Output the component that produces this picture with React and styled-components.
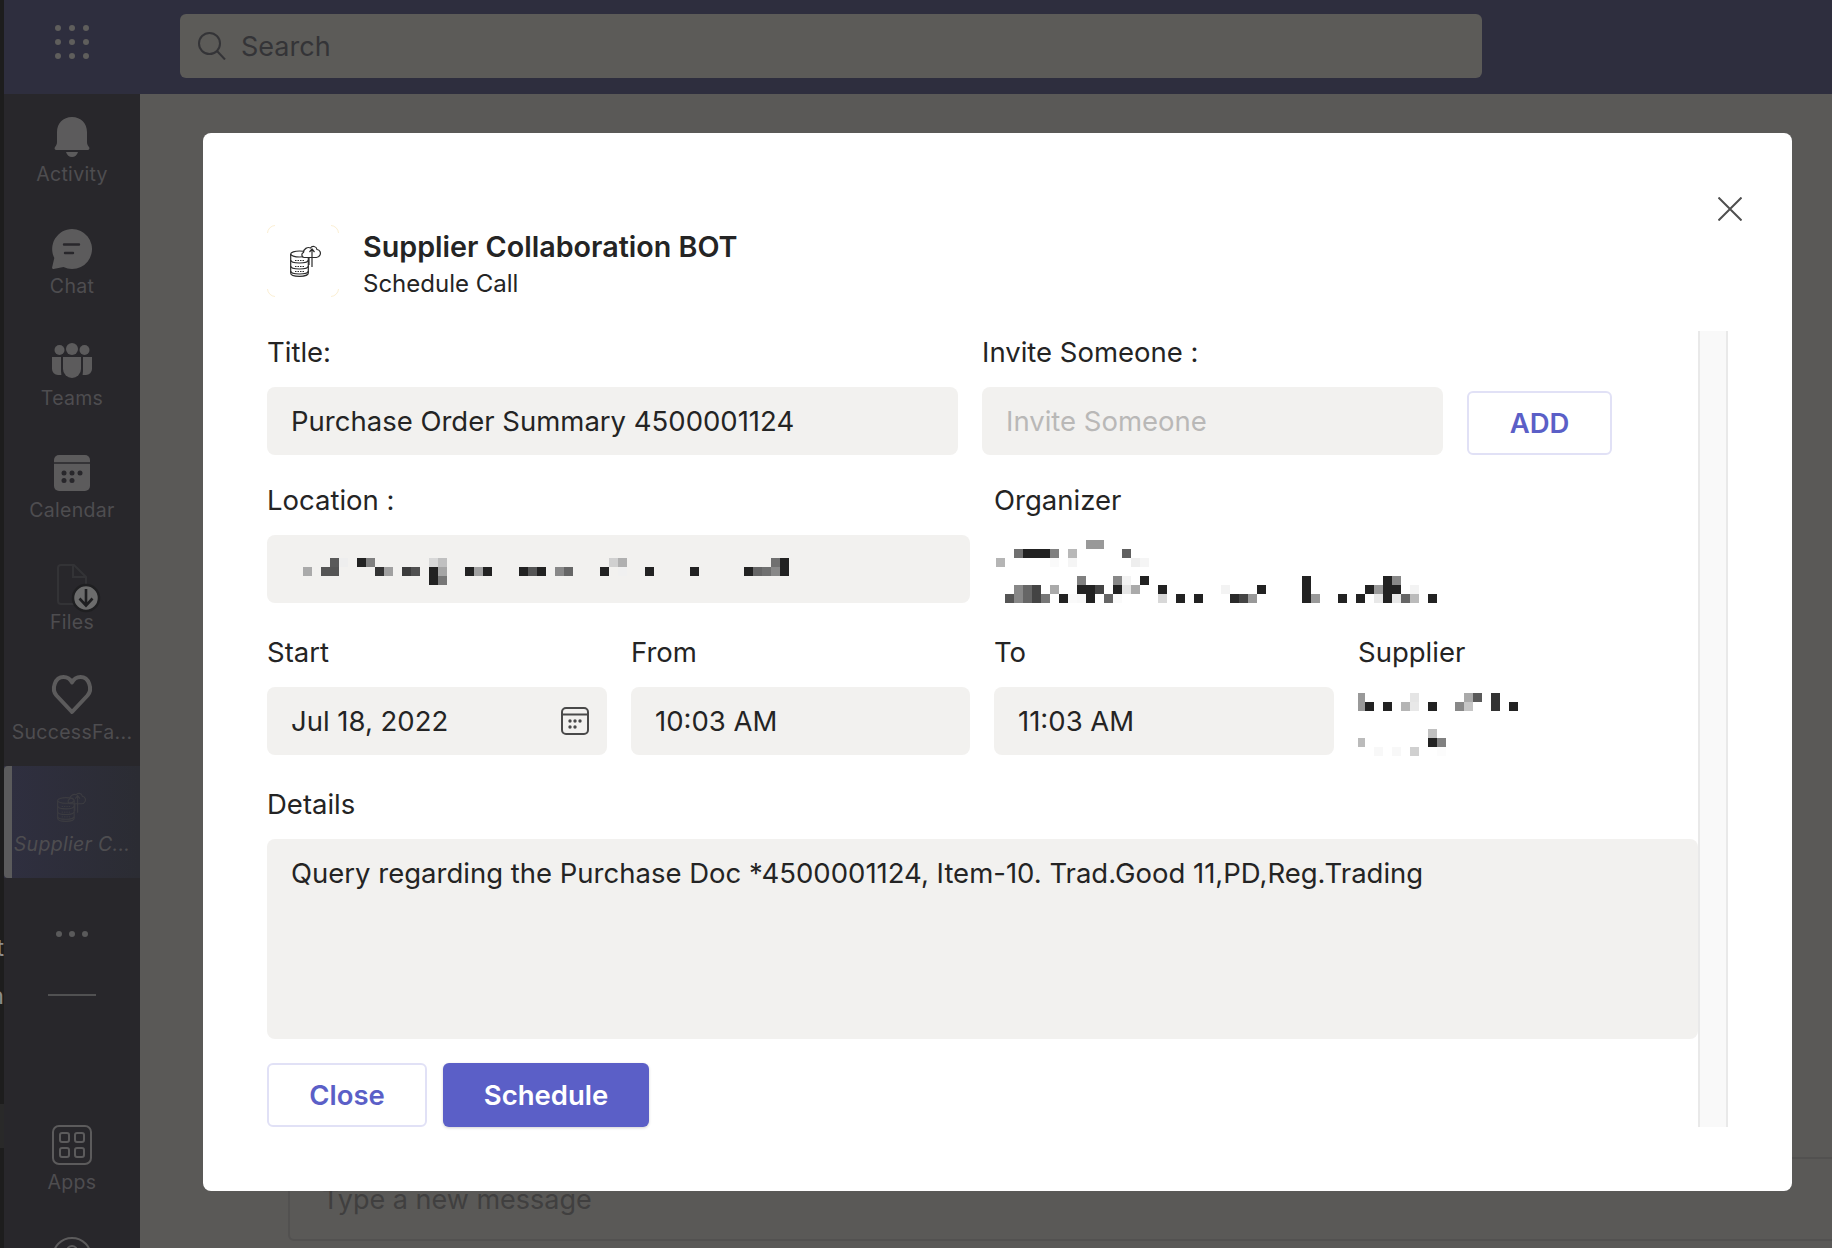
import React from "react";
import styled, { createGlobalStyle } from "styled-components";

const GlobalStyle = createGlobalStyle`
  html, body {
    margin: 0;
    padding: 0;
    background: #5a5957;
  }
  * {
    box-sizing: border-box;
  }
`;

const Page = styled.div`
  position: relative;
  display: flex;
  width: 1832px;
  height: 1248px;
  overflow: hidden;
  font-family: Inter, "Noto Sans", sans-serif;
  color: #242424;
`;
const Edge = styled.div`
  display: flex;
  flex-direction: column;
  align-items: flex-end;
  width: 4px;
  flex: none;
  padding-top: 936px;
  overflow: hidden;
  background: #1d1d1d;
  color: #8c8c8c;
  font-size: 24px;
  line-height: 24px;
`;
const EdgeLetter = styled.span`
  margin-bottom: 24px;
`;
const EdgeBlock = styled.div`
  flex: none;
  align-self: stretch;
  height: 44px;
  margin-top: 72px;
  background: #292929;
`;
const Shell = styled.div`
  display: flex;
  flex-direction: column;
  flex: 1;
  min-width: 0;
`;
const TopBar = styled.div`
  display: flex;
  align-items: flex-start;
  flex: none;
  height: 94px;
  background: #2e2e3e;
`;
const Waffle = styled.div`
  display: flex;
  align-items: center;
  justify-content: center;
  width: 136px;
  height: 84px;
  flex: none;
  color: #5f5e5c;
`;
const SearchBox = styled.div`
  display: flex;
  align-items: center;
  gap: 15px;
  width: 1302px;
  height: 64px;
  margin: 14px 0 0 40px;
  padding-left: 18px;
  border-radius: 6px;
  background: #5c5b58;
  color: #343437;
  font-size: 27px;
`;
const Content = styled.div`
  display: flex;
  flex: 1;
  min-height: 0;
`;
const Sidebar = styled.div`
  display: flex;
  flex-direction: column;
  align-items: stretch;
  flex: none;
  width: 136px;
  padding-top: 2px;
  overflow: hidden;
  background: #28272b;
`;
const NavItem = styled.div`
  position: relative;
  display: flex;
  flex-direction: column;
  align-items: center;
  flex: none;
  height: ${(p) => (p.$short ? 110 : 112)}px;
  padding-top: 21px;
  background: ${(p) => (p.$active ? "linear-gradient(90deg, #2f2f40, #2b2c33)" : "transparent")};
  color: #5c5b5c;
`;
const ActiveBar = styled.div`
  position: absolute;
  left: 0;
  top: 0;
  bottom: 0;
  width: 8px;
  border-radius: 4px 0 0 4px;
  background: #5b5b5c;
`;
const IconBox = styled.div`
  display: flex;
  align-items: center;
  justify-content: center;
  width: 40px;
  height: 40px;
  flex: none;
  color: ${(p) => (p.$dim ? "#3c3c41" : "inherit")};
`;
const NavLabel = styled.div`
  text-align: center;
  white-space: nowrap;
  font-size: 19.5px;
  line-height: 34px;
  letter-spacing: 0.3px;
  font-style: ${(p) => (p.$active ? "italic" : "normal")};
  color: #4e4d50;
`;
const MoreDots = styled.div`
  display: flex;
  align-items: center;
  justify-content: center;
  gap: 7px;
  flex: none;
  height: 112px;
`;
const MoreDot = styled.span`
  width: 6px;
  height: 6px;
  border-radius: 50%;
  background: #5a5a5b;
`;
const SideRule = styled.div`
  flex: none;
  width: 48px;
  height: 2px;
  margin: 4px auto 0;
  background: #515152;
`;
const SideSpacer = styled.div`
  flex: none;
  height: 108px;
`;
const Main = styled.div`
  display: flex;
  flex-direction: column;
  justify-content: flex-end;
  flex: 1;
  padding: 0 0 7px 148px;
  background: #5a5957;
`;
const Compose = styled.div`
  display: flex;
  align-items: center;
  height: 84px;
  margin-right: -10px;
  padding-left: 32px;
  border: 2px solid #525150;
  border-radius: 6px;
  color: #403f3f;
  font-size: 27px;
`;

const Modal = styled.div`
  position: absolute;
  left: 203px;
  top: 133px;
  width: 1589px;
  height: 1058px;
  padding: 92px 64px 0;
  border-radius: 8px;
  background: #fff;
`;
const CloseIcon = styled.button`
  position: absolute;
  right: 50px;
  top: 64px;
  display: flex;
  width: 24px;
  height: 24px;
  padding: 0;
  border: 0;
  background: none;
  color: #4f4f4f;
`;
const Header = styled.div`
  display: flex;
  align-items: center;
  gap: 24px;
  height: 72px;
  margin-bottom: 34px;
`;
const Tile = styled.div`
  position: relative;
  display: flex;
  align-items: center;
  justify-content: center;
  width: 72px;
  height: 72px;
  padding-left: 5px;
  flex: none;
  color: #2b2b2b;
`;
const TileCorners = styled.svg`
  position: absolute;
  inset: 0;
`;
const Titles = styled.div`
  display: flex;
  flex-direction: column;
  padding-top: 7px;
`;
const AppTitle = styled.div`
  font-size: 28.7px;
  line-height: 37px;
  font-weight: 600;
`;
const AppSubtitle = styled.div`
  font-size: 24px;
  line-height: 37px;
`;
const Body = styled.div`
  display: flex;
  height: 796px;
`;
const Form = styled.div`
  display: flex;
  flex-direction: column;
  width: 1431px;
  flex: none;
`;
const Row = styled.div`
  display: grid;
  grid-template-columns: ${(p) => p.$cols};
  column-gap: 24px;
  margin-top: ${(p) => p.$top}px;
`;
const Column = styled.div`
  display: flex;
  flex-direction: column;
  min-width: 0;
`;
const Label = styled.div`
  font-size: 27.5px;
  line-height: 34px;
  margin-bottom: 18px;
`;
const Field = styled.div`
  position: relative;
  display: flex;
  align-items: center;
  justify-content: space-between;
  height: 68px;
  padding: 0 18px 0 24px;
  border-radius: 8px;
  background: #f2f1ef;
  font-size: 27.5px;
  color: ${(p) => (p.$placeholder ? "#b9b8b7" : "#242424")};
`;
const DetailsField = styled.div`
  height: 200px;
  padding: 17px 24px;
  border-radius: 8px;
  background: #f2f1ef;
  font-size: 27.5px;
  line-height: 34px;
`;
const OutlineButton = styled.button`
  width: ${(p) => p.$width}px;
  height: 64px;
  padding: 0;
  border: 2px solid #e1e1f6;
  border-radius: 6px;
  background: #fff;
  color: #5b5fc7;
  font-family: inherit;
  font-size: 27.5px;
  font-weight: 600;
`;
const AddButton = styled(OutlineButton)`
  align-self: end;
`;
const PrimaryButton = styled.button`
  width: 206px;
  height: 64px;
  padding: 0;
  border: 0;
  border-radius: 6px;
  background: #5b5fc7;
  box-shadow: 0 1px 3px rgba(0, 0, 0, 0.18);
  color: #fff;
  font-family: inherit;
  font-size: 27.5px;
  font-weight: 600;
`;
const Actions = styled.div`
  display: flex;
  gap: 16px;
  margin-top: 24px;
`;
const Track = styled.div`
  width: 30px;
  flex: none;
  border-left: 2px solid #e9e9e9;
  border-right: 2px solid #e9e9e9;
  background: #f9f9f9;
`;
const MosaicSvg = styled.svg`
  display: block;
  flex: none;
  margin-top: ${(p) => p.$top || 0}px;
  margin-left: ${(p) => p.$left || 0}px;
`;

// blurred out names, [col, row, colour] at 9px a cell
const LOCATION = [
  [1, 1, "#aaa"], [3, 1, "#555"], [4, 1, "#555"], [4, 0, "#5a5a5a"], [5, 0, "#eee"], [7, 0, "#222"], [8, 0, "#808080"],
  [9, 1, "#333"], [10, 1, "#a0a0a0"], [12, 1, "#3c3c3c"], [13, 1, "#505050"], [15, 0, "#d8d8d8"], [16, 0, "#c0c0c0"],
  [15, 1, "#222"], [16, 1, "#a5a5a5"], [15, 2, "#222"], [16, 2, "#777"], [19, 1, "#222"], [20, 1, "#a0a0a0"], [21, 1, "#222"],
  [25, 1, "#222"], [26, 1, "#555"], [27, 1, "#222"], [29, 1, "#888"], [30, 1, "#666"], [34, 1, "#222"], [35, 0, "#d0d0d0"],
  [36, 0, "#b0b0b0"], [36, 1, "#f0f0f0"], [39, 1, "#222"], [44, 1, "#222"], [50, 1, "#222"], [51, 1, "#666"], [52, 1, "#707070"],
  [53, 1, "#888"], [53, 0, "#707070"], [54, 0, "#222"], [54, 1, "#222"],
];
const ORGANIZER = [
  [10, 0, "#999"], [11, 0, "#999"], [2, 1, "#707070"], [3, 1, "#222"], [4, 1, "#222"], [5, 1, "#222"], [6, 1, "#808080"],
  [8, 1, "#b8b8b8"], [14, 1, "#606060"], [0, 2, "#b5b5b5"], [6, 2, "#fafafa"], [8, 2, "#f5f5f5"], [15, 2, "#eee"], [16, 2, "#f5f5f5"],
  [9, 4, "#808080"], [13, 4, "#888"], [14, 4, "#f3f3f3"], [16, 4, "#222"], [34, 4, "#222"], [43, 4, "#222"], [44, 4, "#888"],
  [2, 5, "#888"], [3, 5, "#666"], [4, 5, "#444"], [6, 5, "#aaa"], [9, 5, "#222"], [10, 5, "#222"], [11, 5, "#444"], [13, 5, "#222"],
  [14, 5, "#e5e5e5"], [15, 5, "#aaa"], [18, 5, "#222"], [25, 5, "#f3f3f3"], [29, 5, "#222"], [34, 5, "#222"], [41, 5, "#222"],
  [42, 5, "#999"], [43, 5, "#222"], [44, 5, "#222"], [46, 5, "#f3f3f3"], [1, 6, "#555"], [2, 6, "#888"], [3, 6, "#666"], [4, 6, "#444"],
  [5, 6, "#777"], [7, 6, "#222"], [8, 6, "#fafafa"], [9, 6, "#f8f8f8"], [10, 6, "#222"], [12, 6, "#666"], [13, 6, "#fafafa"],
  [18, 6, "#d8d8d8"], [20, 6, "#222"], [22, 6, "#222"], [26, 6, "#2a2a2a"], [27, 6, "#444"], [28, 6, "#999"], [34, 6, "#222"],
  [35, 6, "#999"], [38, 6, "#222"], [40, 6, "#222"], [42, 6, "#e8e8e8"], [43, 6, "#222"], [44, 6, "#e8e8e8"], [45, 6, "#666"],
  [46, 6, "#bbb"], [48, 6, "#222"],
];
const SUPPLIER = [
  [0, 0, "#999"], [6, 0, "#e5e5e5"], [12, 0, "#aaa"], [13, 0, "#5a5a5a"], [15, 0, "#333"], [0, 1, "#999"], [1, 1, "#222"], [3, 1, "#222"],
  [5, 1, "#b5b5b5"], [6, 1, "#e8e8e8"], [8, 1, "#222"], [11, 1, "#888"], [12, 1, "#c5c5c5"], [15, 1, "#333"], [17, 1, "#222"],
  [8, 4, "#c0c0c0"], [0, 5, "#bbb"], [8, 5, "#222"], [9, 5, "#808080"], [2, 6, "#f8f8f8"], [4, 6, "#f8f8f8"], [6, 6, "#d0d0d0"], [9, 6, "#fcfcfc"],
];

function Mosaic({ cells, cols, rows, top, left, clip = 0 }) {
  return (
    <MosaicSvg $top={top} $left={left} width={cols * 9 - clip} height={rows * 9} viewBox={`${clip} 0 ${cols * 9 - clip} ${rows * 9}`}>
      {cells.map(([c, r, fill]) => (
        <rect key={`${c}-${r}`} x={c * 9} y={r * 9} width="9" height="9" fill={fill} />
      ))}
    </MosaicSvg>
  );
}

function WaffleIcon() {
  const dots = [];
  for (let y = 0; y < 3; y++) {
    for (let x = 0; x < 3; x++) {
      dots.push(<circle key={`${x}${y}`} cx={3 + x * 14} cy={3 + y * 14} r="3" />);
    }
  }
  return (
    <svg width="34" height="34" viewBox="0 0 34 34" fill="currentColor">
      {dots}
    </svg>
  );
}

const SearchIcon = () => (
  <svg width="28" height="28" viewBox="0 0 28 28" fill="none" stroke="currentColor" strokeWidth="2">
    <circle cx="11.5" cy="11.5" r="10.5" />
    <path d="M19 19l8 8.5" />
  </svg>
);

const BellIcon = () => (
  <svg width="40" height="40" viewBox="0 0 40 40" fill="currentColor">
    <path d="M20 0c9 0 15 6.500 15 15v10c0 2 .8 3.600 2 5 .9 1.200.4 3-1.400 3H4.400c-1.800 0-2.300-1.800-1.400-3 1.200-1.400 2-3 2-5V15C5 6.500 11 0 20 0z" />
    <path d="M14 35h12c-.8 3-3.200 5-6 5s-5.200-2-6-5z" />
  </svg>
);

const ChatIcon = () => (
  <svg width="40" height="40" viewBox="0 0 40 40">
    <path fill="currentColor" d="M20 0a20 20 0 1 1-8.500 38.100L1.500 40c-1 .1-1.600-.6-1.400-1.500L2.300 29A20 20 0 0 1 20 0z" />
    <path stroke="#28272b" strokeWidth="2.400" strokeLinecap="round" d="M12 15.500h15M13 24h8" />
  </svg>
);

const TeamsIcon = () => (
  <svg width="40" height="40" viewBox="0 -2 40 40" fill="currentColor">
    <circle cx="20" cy="6" r="6" />
    <circle cx="7.500" cy="7" r="5" />
    <circle cx="32.500" cy="7" r="5" />
    <path d="M11 14h18v12a9 9 0 0 1-18 0z" />
    <path d="M0 14h9v14l.4 4H6a6 6 0 0 1-6-6z" />
    <path d="M31 14h9v12a6 6 0 0 1-6 6h-3.400l.4-4z" />
  </svg>
);

const CalendarIcon = () => (
  <svg width="40" height="40" viewBox="0 0 40 40">
    <rect x="2" y="2" width="36" height="36" rx="5" fill="currentColor" />
    <path stroke="#28272b" strokeWidth="1.500" d="M2 10h36" />
    <g fill="#28272b">
      <circle cx="12" cy="20" r="2.500" />
      <circle cx="20" cy="20" r="2.500" />
      <circle cx="28" cy="20" r="2.500" />
      <circle cx="12" cy="27.500" r="2.500" />
      <circle cx="20" cy="27.500" r="2.500" />
    </g>
  </svg>
);

const FilesIcon = () => (
  <svg width="40" height="40" viewBox="0 0 40 40" style={{ overflow: "visible" }}>
    <path fill="none" stroke="#333336" strokeWidth="2" d="M9 0h13l12 12v24a3 3 0 0 1-3 3H9a3 3 0 0 1-3-3V3a3 3 0 0 1 3-3zM21 0v12h13" />
    <circle cx="34" cy="33" r="13" fill="#6c6c6c" stroke="#1f1f21" strokeWidth="2.500" />
    <path fill="none" stroke="#1f1f21" strokeWidth="2.600" d="M34 24v17M27.500 33.500l6.500 7 6.500-7" />
  </svg>
);

const HeartIcon = () => (
  <svg width="40" height="40" viewBox="0 0 40 40" fill="none" stroke="currentColor" strokeWidth="4" strokeLinejoin="round" style={{ overflow: "visible" }}>
    <path d="M20 37L4.500 20.500C-1 14 3 2 11.500 2c3.800 0 6.800 2 8.500 5.500C21.700 4 24.700 2 28.500 2 37 2 41 14 35.500 20.500z" />
  </svg>
);

const LogoIcon = ({ size = 32, cloud = "#fff" }) => (
  <svg width={size} height={size} viewBox="0 0 32 32" fill="none" stroke="currentColor" strokeWidth="1.200">
    <ellipse cx="9.500" cy="9" rx="8.800" ry="3" />
    <path d="M.7 9v19c0 2 4 3.300 8.800 3.300s8.800-1.300 8.800-3.300V9" />
    <path d="M.7 15c0 2 4 3 8.800 3s8.800-1 8.800-3M.7 21c0 2 4 3 8.800 3s8.800-1 8.800-3M.7 26c0 2 4 3 8.800 3s8.800-1 8.800-3" />
    <path strokeDasharray="1.500 1" strokeWidth="1" d="M5 15.500h9M5 21.500h9M5 26.500h9" />
    <path fill={cloud} d="M14 12.500c-2.500-.5-3-4-.5-5 0-3.500 4-6 7-4.500 1.500-2.500 6-2 6.500 1.500 3 .3 4 3.500 3 5.500-.7 1.500-2 2.500-3.500 2.500z" />
    <path d="M22 22V4M19.500 7L22 4l2.500 3M19 12.500V20" />
  </svg>
);

const AppsIcon = () => (
  <svg width="40" height="40" viewBox="0 0 40 40" fill="none" stroke="currentColor" strokeWidth="2">
    <rect x="1" y="1" width="38" height="38" rx="6" />
    <rect x="8" y="8" width="9" height="9" rx="2" />
    <rect x="23" y="8" width="9" height="9" rx="2" />
    <rect x="8" y="23" width="9" height="9" rx="2" />
    <rect x="23" y="23" width="9" height="9" rx="2" />
  </svg>
);

const HelpIcon = () => (
  <svg width="40" height="40" viewBox="0 0 40 40" fill="none" stroke="currentColor" strokeWidth="2">
    <circle cx="20" cy="20" r="19" />
    <circle cx="20" cy="14" r="5" />
  </svg>
);

const DateIcon = () => (
  <svg width="28" height="28" viewBox="0 0 28 28" fill="none" stroke="#494949" strokeWidth="2">
    <rect x="1" y="1" width="26" height="26" rx="4" />
    <path d="M1 7.500h26" />
    <g fill="#494949" stroke="none">
      <circle cx="9" cy="14" r="1.700" />
      <circle cx="14" cy="14" r="1.700" />
      <circle cx="19" cy="14" r="1.700" />
      <circle cx="9" cy="20" r="1.700" />
      <circle cx="14" cy="20" r="1.700" />
    </g>
  </svg>
);

const NAV = [
  { label: "Activity", icon: <BellIcon /> },
  { label: "Chat", icon: <ChatIcon /> },
  { label: "Teams", icon: <TeamsIcon /> },
  { label: "Calendar", icon: <CalendarIcon /> },
  { label: "Files", icon: <FilesIcon />, short: true },
  { label: "SuccessFa...", icon: <HeartIcon /> },
];

export default function App() {
  return (
    <Page>
      <GlobalStyle />
      <Edge>
        <EdgeLetter>t</EdgeLetter>
        <EdgeLetter>n</EdgeLetter>
        <EdgeBlock />
      </Edge>
      <Shell>
        <TopBar>
          <Waffle>
            <WaffleIcon />
          </Waffle>
          <SearchBox>
            <SearchIcon />
            Search
          </SearchBox>
        </TopBar>
        <Content>
          <Sidebar>
            {NAV.map((item) => (
              <NavItem key={item.label} $short={item.short}>
                <IconBox>{item.icon}</IconBox>
                <NavLabel>{item.label}</NavLabel>
              </NavItem>
            ))}
            <NavItem $active>
              <ActiveBar />
              <IconBox $dim>
                <LogoIcon size={30} cloud="none" />
              </IconBox>
              <NavLabel $active>Supplier C...</NavLabel>
            </NavItem>
            <MoreDots>
              <MoreDot />
              <MoreDot />
              <MoreDot />
            </MoreDots>
            <SideRule />
            <SideSpacer />
            <NavItem>
              <IconBox>
                <AppsIcon />
              </IconBox>
              <NavLabel>Apps</NavLabel>
            </NavItem>
            <NavItem>
              <IconBox>
                <HelpIcon />
              </IconBox>
            </NavItem>
          </Sidebar>
          <Main>
            <Compose>Type a new message</Compose>
          </Main>
        </Content>
      </Shell>

      <Modal>
        <CloseIcon aria-label="Close">
          <svg width="24" height="24" viewBox="0 0 24 24" fill="none" stroke="currentColor" strokeWidth="2">
            <path d="M.5.500l23 23M23.500.500l-23 23" />
          </svg>
        </CloseIcon>
        <Header>
          <Tile>
            <TileCorners width="72" height="72" viewBox="0 0 72 72" fill="none" stroke="#fbefd3">
              <path d="M.5 8A8 8 0 0 1 8 .5M64 .5A8 8 0 0 1 71.500 8M71.500 64A8 8 0 0 1 64 71.500M8 71.500A8 8 0 0 1 .5 64" />
            </TileCorners>
            <LogoIcon />
          </Tile>
          <Titles>
            <AppTitle>Supplier Collaboration BOT</AppTitle>
            <AppSubtitle>Schedule Call</AppSubtitle>
          </Titles>
        </Header>
        <Body>
          <Form>
            <Row $cols="691px 461px 145px" $top={4}>
              <Column>
                <Label>Title:</Label>
                <Field>Purchase Order Summary 4500001124</Field>
              </Column>
              <Column>
                <Label>Invite Someone :</Label>
                <Field $placeholder>Invite Someone</Field>
              </Column>
              <AddButton $width={145}>ADD</AddButton>
            </Row>
            <Row $cols="703px 1fr" $top={28}>
              <Column>
                <Label>Location :</Label>
                <Field>
                  <Mosaic cells={LOCATION} cols={55} rows={3} top={5} left={3} />
                </Field>
              </Column>
              <Column>
                <Label>Organizer</Label>
                <Mosaic cells={ORGANIZER} cols={49} rows={7} top={5} left={2} />
              </Column>
            </Row>
            <Row $cols="340px 339px 340px 1fr" $top={32}>
              <Column>
                <Label>Start</Label>
                <Field>
                  Jul 18, 2022
                  <DateIcon />
                </Field>
              </Column>
              <Column>
                <Label>From</Label>
                <Field>10:03 AM</Field>
              </Column>
              <Column>
                <Label>To</Label>
                <Field>11:03 AM</Field>
              </Column>
              <Column>
                <Label>Supplier</Label>
                <Mosaic cells={SUPPLIER} cols={18} rows={7} top={6} clip={2} />
              </Column>
            </Row>
            <Row $cols="1fr" $top={31}>
              <Column>
                <Label>Details</Label>
                <DetailsField>Query regarding the Purchase Doc *4500001124, Item-10. Trad.Good 11,PD,Reg.Trading</DetailsField>
              </Column>
            </Row>
            <Actions>
              <OutlineButton $width={160}>Close</OutlineButton>
              <PrimaryButton>Schedule</PrimaryButton>
            </Actions>
          </Form>
          <Track />
        </Body>
      </Modal>
    </Page>
  );
}
